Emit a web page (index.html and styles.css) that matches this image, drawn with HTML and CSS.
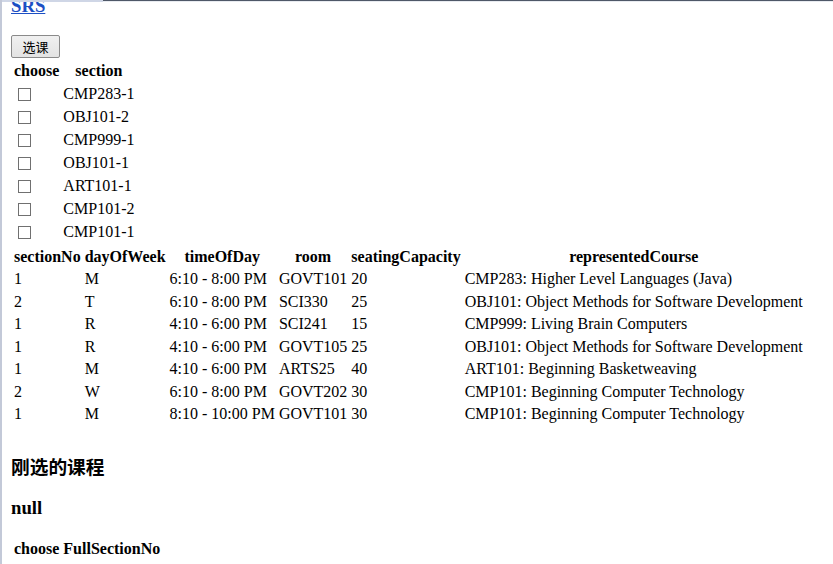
FILE: index.html
```html
<!DOCTYPE html>
<html>
<head>
<meta charset="utf-8">
<link rel="stylesheet" href="styles.css">
</head>
<body>
<div class="frame">
  <div class="topbar"><span class="seg-light"></span><span class="seg-dark"></span></div>
  <div class="page">
    <h3 class="title"><a href="#">SRS</a></h3>
    <form class="pick-form">
      <button type="button" class="pick-btn">选课</button>
      <table class="grid">
        <tr><th>choose</th><th>section</th></tr>
        <tr><td><input type="checkbox" class="box"></td><td>CMP283-1</td></tr>
        <tr><td><input type="checkbox" class="box"></td><td>OBJ101-2</td></tr>
        <tr><td><input type="checkbox" class="box"></td><td>CMP999-1</td></tr>
        <tr><td><input type="checkbox" class="box"></td><td>OBJ101-1</td></tr>
        <tr><td><input type="checkbox" class="box"></td><td>ART101-1</td></tr>
        <tr><td><input type="checkbox" class="box"></td><td>CMP101-2</td></tr>
        <tr><td><input type="checkbox" class="box"></td><td>CMP101-1</td></tr>
      </table>
    </form>
    <table class="grid">
      <tr><th>sectionNo</th><th>dayOfWeek</th><th>timeOfDay</th><th>room</th><th>seatingCapacity</th><th>representedCourse</th></tr>
      <tr><td>1</td><td>M</td><td>6:10 - 8:00 PM</td><td>GOVT101</td><td>20</td><td>CMP283: Higher Level Languages (Java)</td></tr>
      <tr><td>2</td><td>T</td><td>6:10 - 8:00 PM</td><td>SCI330</td><td>25</td><td>OBJ101: Object Methods for Software Development</td></tr>
      <tr><td>1</td><td>R</td><td>4:10 - 6:00 PM</td><td>SCI241</td><td>15</td><td>CMP999: Living Brain Computers</td></tr>
      <tr><td>1</td><td>R</td><td>4:10 - 6:00 PM</td><td>GOVT105</td><td>25</td><td>OBJ101: Object Methods for Software Development</td></tr>
      <tr><td>1</td><td>M</td><td>4:10 - 6:00 PM</td><td>ARTS25</td><td>40</td><td>ART101: Beginning Basketweaving</td></tr>
      <tr><td>2</td><td>W</td><td>6:10 - 8:00 PM</td><td>GOVT202</td><td>30</td><td>CMP101: Beginning Computer Technology</td></tr>
      <tr><td>1</td><td>M</td><td>8:10 - 10:00 PM</td><td>GOVT101</td><td>30</td><td>CMP101: Beginning Computer Technology</td></tr>
    </table>
    <h3 class="heading cjk">刚选的课程</h3>
    <h3 class="heading">null</h3>
    <table class="grid">
      <tr><th>choose</th><th>FullSectionNo</th></tr>
    </table>
  </div>
</div>
</body>
</html>
```

FILE: styles.css
```css
html, body {
  margin: 0;
  padding: 0;
  background: #ffffff;
}

body {
  font-family: "Liberation Serif", "Times New Roman", serif;
  font-size: 16px;
  color: #000000;
}

.frame {
  position: relative;
  height: 564px;
  overflow: hidden;
  border-left: 2px solid #c3c9d8;
  box-sizing: border-box;
}

.topbar {
  position: absolute;
  top: 0;
  left: 0;
  right: 0;
  height: 2px;
  display: flex;
  z-index: 2;
}

.seg-light {
  width: 101px;
  background: #cfd6e6;
}

.seg-dark {
  flex: 1;
  background: #4f5868;
  border-bottom: 1px solid #e8ebf0;
}

.page {
  padding-left: 9px;
}

.title {
  font-size: 18.72px;
  line-height: 21.5px;
  font-weight: bold;
  margin: -5px 0 18.72px 0;
}

.title a {
  color: #1c4fc4;
  text-decoration: underline;
}

.pick-form {
  margin: 0;
}

.pick-btn {
  display: block;
  width: 49px;
  height: 23px;
  margin: 0 0 1px 0;
  padding: 0;
  font-family: "Noto Sans CJK SC", sans-serif;
  font-size: 13px;
  line-height: 20px;
  color: #000;
  background: linear-gradient(#f0f0f0, #e3e3e3);
  border: 1px solid #8a8a8a;
  border-radius: 2px;
}

.grid {
  border-spacing: 2px;
  font-size: 16px;
}

.grid th,
.grid td {
  padding: 1px;
  line-height: 18.5px;
  white-space: nowrap;
}

.grid th {
  font-weight: bold;
  text-align: center;
}

.grid td {
  text-align: left;
}

.box {
  appearance: none;
  -webkit-appearance: none;
  display: block;
  width: 13px;
  height: 13px;
  margin: 3px 3px 3px 4px;
  border: 1px solid #707070;
  background: #fff;
  box-sizing: border-box;
}

.heading {
  font-size: 18.72px;
  line-height: 21.5px;
  font-weight: bold;
  margin: 18.72px 0;
}

.heading.cjk {
  margin-top: 30px;
  font-family: "Liberation Serif", "Noto Sans CJK SC", serif;
  font-weight: 600;
}
```
